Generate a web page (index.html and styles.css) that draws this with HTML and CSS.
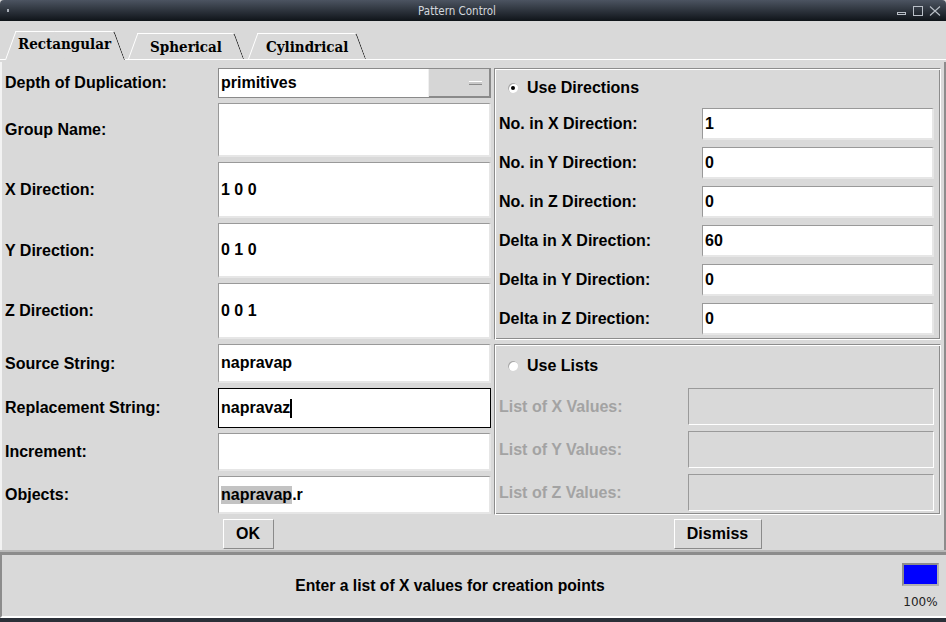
FILE: index.html
```html
<!DOCTYPE html>
<html lang="en">
<head>
    <meta charset="UTF-8">
    <title>Pattern Control</title>
    <link rel="stylesheet" href="styles.css">
</head>
<body>

<div class="window">
    <!-- window title bar -->
    <div class="titlebar">
        <span class="title-dot"></span>
        <span class="title">Pattern Control</span>
        <svg class="win-buttons" width="50" height="21" viewBox="0 0 50 21">
            <rect x="1.5" y="12.5" width="8" height="2" fill="none" stroke="#b9bfc7"/>
            <rect x="17.5" y="6.5" width="9" height="9" fill="none" stroke="#b9bfc7"/>
            <path d="M34 6.5 L44 15.5 M44 6.5 L34 15.5" stroke="#b9bfc7" stroke-width="1.1"/>
        </svg>
    </div>

    <!-- notebook tabs -->
    <div class="tabs">
        <div class="tab active">Rectangular</div>
        <div class="tab sph">Spherical</div>
        <div class="tab cyl">Cylindrical</div>
    </div>

    <div class="page">
        <!-- left side form -->
        <div class="left-form">
            <div class="lbl">Depth of Duplication:</div>
            <div class="combo">
                <span class="combo-value">primitives</span>
                <span class="combo-btn"><span class="dash"></span></span>
            </div>

            <div class="lbl">Group Name:</div>
            <div class="entry"></div>

            <div class="lbl">X Direction:</div>
            <div class="entry">1 0 0</div>

            <div class="lbl">Y Direction:</div>
            <div class="entry">0 1 0</div>

            <div class="lbl">Z Direction:</div>
            <div class="entry">0 0 1</div>

            <div class="lbl">Source String:</div>
            <div class="entry">napravap</div>

            <div class="lbl">Replacement String:</div>
            <div class="entry focused">napravaz<span class="caret"></span></div>

            <div class="lbl">Increment:</div>
            <div class="entry"></div>

            <div class="lbl">Objects:</div>
            <div class="entry"><span class="sel">napravap</span>.r</div>
        </div>

        <!-- right side groups -->
        <div class="right-col">
            <div class="group dirs">
                <div class="radio-row"><span class="radio on"></span>Use Directions</div>

                <div class="lbl">No. in X Direction:</div>
                <div class="entry">1</div>
                <div class="lbl">No. in Y Direction:</div>
                <div class="entry">0</div>
                <div class="lbl">No. in Z Direction:</div>
                <div class="entry">0</div>
                <div class="lbl">Delta in X Direction:</div>
                <div class="entry">60</div>
                <div class="lbl">Delta in Y Direction:</div>
                <div class="entry">0</div>
                <div class="lbl">Delta in Z Direction:</div>
                <div class="entry">0</div>
            </div>

            <div class="group lists">
                <div class="radio-row"><span class="radio"></span>Use Lists</div>

                <div class="lbl disabled">List of X Values:</div>
                <div class="entry off"></div>
                <div class="lbl disabled">List of Y Values:</div>
                <div class="entry off"></div>
                <div class="lbl disabled">List of Z Values:</div>
                <div class="entry off"></div>
            </div>
        </div>

        <div class="btn-cell"><button class="btn ok">OK</button></div>
        <div class="btn-cell"><button class="btn dismiss">Dismiss</button></div>
    </div>

    <!-- status line -->
    <div class="status">
        <div class="status-text">Enter a list of X values for creation points</div>
        <div class="meter">
            <div class="meter-bar"></div>
            <div class="meter-pct">100%</div>
        </div>
    </div>
    <div class="bottom-edge"></div>
</div>

</body>
</html>
```

FILE: styles.css
```css
* { box-sizing: border-box; }
html, body { margin: 0; padding: 0; }
body { width: 946px; height: 622px; overflow: hidden; background: #fff; font-family: "Liberation Sans", Arial, sans-serif; font-size: 16px; font-weight: bold; color: #000; }
.window { height: 622px; background: #d9d9d9; display: flex; flex-direction: column; }

/* title bar */
.titlebar { height: 21px; flex: none; display: flex; align-items: center; background: linear-gradient(#4c5461, #0f1419); border-radius: 4px 4px 0 0; }
.title-dot { width: 18px; height: 21px; position: relative; }
.title-dot::after { content: ""; position: absolute; left: 7px; top: 9px; width: 2px; height: 3px; background: #a9afb8; }
.title { flex: 1; text-align: center; font-family: "DejaVu Sans", sans-serif; font-stretch: condensed; font-weight: normal; font-size: 11.5px; color: #d3d7dd; }
.win-buttons { flex: none; display: block; }

/* tabs */
.tabs { height: 39px; flex: none; display: flex; align-items: flex-end; gap: 4px; padding-left: 5px; border-bottom: 1px solid #fff; margin-bottom: 2px; }
.tab { position: relative; z-index: 0; height: 26px; line-height: 28px; padding: 0 19px; font-family: "DejaVu Serif", serif; font-stretch: condensed; font-size: 15px; font-weight: bold; }
.tab::before, .tab::after { content: ""; position: absolute; top: 0; bottom: 0; transform-origin: bottom; z-index: -1; }
.tab::before { left: 0; right: 50%; border-top: 1px solid #fff; border-left: 1px solid #fff; transform: skewX(-20deg); }
.tab::after { left: 50%; right: 0; border-top: 1px solid #fff; border-right: 1px solid #1e1e1e; border-top-right-radius: 3px; transform: skewX(20deg); }
.tab.active { height: 29px; margin-bottom: -1px; padding: 0 13px; line-height: 27px; }
.tab.active::before, .tab.active::after { background: #d9d9d9; }
.tab.sph { padding: 0 22px; }
.tab.cyl { padding: 0 18px; }

/* page */
.page { flex: none; display: grid; grid-template-columns: 492px 447px; row-gap: 4px; padding: 6px 0 3px 0; border-left: 2px solid #f3f3f3; border-right: 2px solid #8c8c8c; width: 946px; }
.lbl { display: flex; align-items: center; white-space: nowrap; }
.lbl.disabled { color: #a3a3a3; }

.left-form { display: grid; grid-template-columns: 216px 273px; grid-template-rows: 30px 54px 56px 55px 56px 39px 40px 38px 38px; row-gap: 5px; align-content: start; }
.left-form .lbl { padding-left: 3px; }

.entry { background: #fff; border-style: solid; border-width: 1px 2px 2px 1px; border-color: #999 #e6e6e6 #e6e6e6 #999; display: flex; align-items: center; padding-left: 2px; white-space: nowrap; }
.entry.focused { border: 1px solid #000; box-shadow: inset 0 0 0 1px #fff; }
.entry.off { background: #d9d9d9; border-width: 1px; border-color: #9a9a9a #fff #fff #9a9a9a; }
.caret { display: inline-block; width: 2px; height: 19px; background: #000; }
.sel { background: #c3c3c3; }

.combo { display: flex; border: 1px solid #8a8a8a; }
.combo-value { flex: none; width: 210px; background: #fff; display: flex; align-items: center; padding-left: 2px; border-right: 1px solid #f0f0f0; }
.combo-btn { flex: 1; display: flex; align-items: center; justify-content: flex-end; padding-right: 7px; background: #d6d6d6; border-right: 1px solid #8a8a8a; border-bottom: 1px solid #8a8a8a; }
.dash { width: 13px; height: 4px; background: #c9c9c9; border-top: 1px solid #fff; border-bottom: 1px solid #8a8a8a; }

/* right groups */
.right-col { display: flex; flex-direction: column; gap: 4px; }
.group { border: 1px solid; border-color: #8c8c8c #fff #fff #8c8c8c; box-shadow: inset 1px 1px 0 #fff, inset -1px -1px 0 #8c8c8c; display: grid; align-content: start; padding: 1px 5px 3px 4px; }
.dirs { height: 272px; grid-template-columns: 203px 232px; grid-template-rows: 31px repeat(6, 32px); row-gap: 7px; }
.dirs .radio-row { padding-top: 4px; }
.lists { height: 171px; grid-template-columns: 189px 246px; grid-template-rows: 36px repeat(3, 37px); row-gap: 6px; }
.radio-row { grid-column: 1 / 3; display: flex; align-items: center; padding: 3px 0 0 9px; gap: 9px; }
.radio { width: 10px; height: 10px; border-radius: 50%; background: #fff; box-shadow: inset 1px 1px 0 #a8a8a8; display: flex; align-items: center; justify-content: center; }
.radio.on::after { content: ""; width: 4px; height: 4px; border-radius: 50%; background: #000; }

/* buttons */
.btn-cell { display: flex; justify-content: center; }
.btn { font: inherit; height: 30px; background: #d9d9d9; border: 1px solid; border-color: #fff #8a8a8a #8a8a8a #fff; padding: 0; color: #000; }
.btn.ok { width: 51px; }
.btn.dismiss { width: 88px; }

/* status */
.status { flex: none; height: 66px; display: flex; border-top: 3px solid #8c8c8c; border-left: 2px solid #8c8c8c; border-bottom: 2px solid #fff; box-shadow: 0 -2px 0 #b8b8b8; }
.status-text { flex: 1; display: flex; align-items: center; justify-content: center; font-size: 15.7px; }
.meter { width: 48px; padding-top: 8px; padding-right: 7px; display: flex; flex-direction: column; align-items: flex-end; }
.meter-bar { width: 37px; height: 23px; background: #0000ff; border: 2px solid; border-color: #8c8c8c #b0b0b0 #b0b0b0 #8c8c8c; }
.meter-pct { margin-top: 9px; width: 37px; text-align: center; font-family: "DejaVu Sans", sans-serif; font-weight: normal; font-size: 12px; line-height: 14px; color: #222; }
.bottom-edge { flex: 1; background: #2b3038; }
```
